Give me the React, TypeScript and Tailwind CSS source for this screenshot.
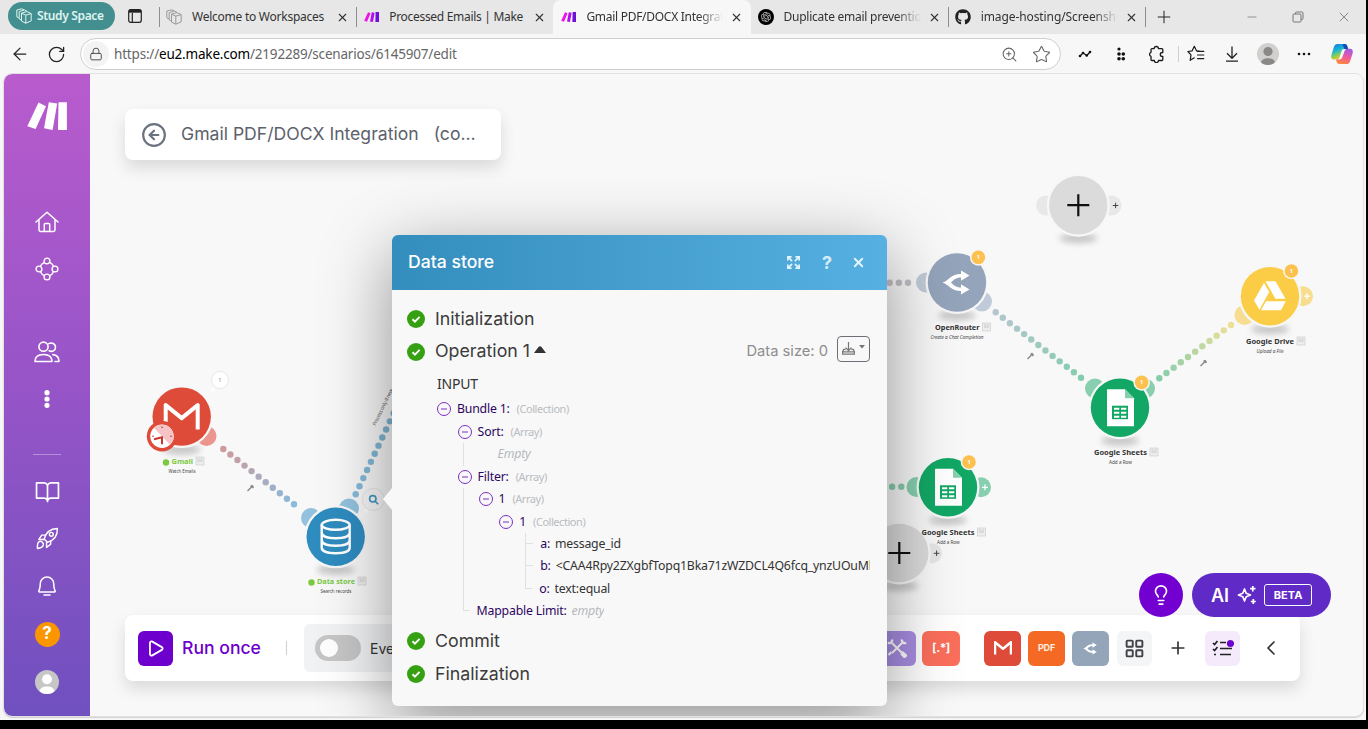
import React from "react";
import {
  ArrowLeft,
  CircleArrowLeft,
  Download,
  Expand,
  Lightbulb,
  LayoutGrid,
  Lock,
  Minus,
  Plus,
  RotateCw,
  Star,
  X,
  ZoomIn,
  Play,
  ChevronLeft,
} from "lucide-react";
import { FaGithub } from "react-icons/fa";
import { RiOpenaiFill } from "react-icons/ri";
import { PiBellSimple, PiBookOpen } from "react-icons/pi";

const SEGOE = "font-['Noto_Sans',sans-serif]";
const INTER = "font-['Inter',sans-serif]";

/* ---------- Icons ---------- */

function MakeMark({ className }: { className?: string }) {
  return (
    <svg viewBox="0 0 40 28" className={className} fill="currentColor">
      <path d="M11.5.6 19 4.3 8.6 27 .3 24.2z" />
      <path d="M21.8.3 30.2 1.6 25.6 28 17 26.2z" />
      <path d="M31.5.2h8.4V28h-8.9z" />
    </svg>
  );
}

function MakeFavicon() {
  return (
    <svg viewBox="0 0 15 10" className="h-[10px] w-[15px]">
      <path d="M4 .2 6.6 1.3 3 9.8.2 8.8z" fill="#f013e6" />
      <path d="M7.8.2 10.6.8 9 10 6 9.5z" fill="#b40ef0" />
      <path d="M11.6.1H15V10h-3.6z" fill="#6d10d8" />
    </svg>
  );
}

function WorkspaceIcon({ className }: { className?: string }) {
  return (
    <svg viewBox="0 0 16 16" className={className} fill="none" stroke="currentColor" strokeWidth="1">
      <path d="M5.5 5.2 11 3.6l4.2 2v7.2l-5.4 2.4-4.3-2.1zM5.5 5.2l4.3 1.9 5.4-1.5M9.8 7.1v8.1" />
      <path d="M5.5 12.2l-2.3-1.4V3.5L8.6 2l2.2 1.2" />
      <path d="M3.2 10.2.8 8.8V2L5.8.8 8 1.9" />
    </svg>
  );
}

function TabActionsIcon() {
  return (
    <svg viewBox="0 0 14 14" className="h-[14px] w-[14px]" fill="none" stroke="#222" strokeWidth="1.2">
      <rect x=".7" y=".7" width="12.6" height="12.6" rx="2" />
      <path d="M1 2.2h12" strokeWidth="3" />
      <path d="M4.3 4v9" />
    </svg>
  );
}

function PuzzleIcon() {
  return (
    <svg viewBox="0 0 18 18" className="h-[18px] w-[18px]" fill="none" stroke="#1a1a1a" strokeWidth="1.3" strokeLinejoin="round">
      <path d="M6.2 3.6a2.1 2.1 0 0 1 4.2 0h3.4a1 1 0 0 1 1 1v2.9h-.6a1.9 1.9 0 0 0 0 3.8h.6v3.2a1 1 0 0 1-1 1h-3.3a2.1 2.1 0 0 1-4.2 0H4a1 1 0 0 1-1-1v-3.2a2.1 2.1 0 0 1 0-4V4.6a1 1 0 0 1 1-1z" />
    </svg>
  );
}

function FavoritesIcon() {
  return (
    <svg viewBox="0 0 18 18" className="h-[18px] w-[18px]" fill="none" stroke="#1a1a1a" strokeWidth="1.2" strokeLinejoin="round" strokeLinecap="round">
      <path d="M12 6.2 9.5 5.8 7.3 1.3 5.2 5.8.9 6.5 4 9.9l-.8 5.4 4.1-2.5" />
      <path d="M10.5 6.4h6.3M10.5 10h6.3M10.5 13.6h6.3" />
    </svg>
  );
}

function CopilotIcon() {
  return (
    <svg viewBox="0 0 24 22" className="h-[22px] w-[24px]">
      <defs>
        <linearGradient id="cop-a" x1="0" y1="0" x2=".4" y2="1">
          <stop offset="0" stopColor="#1673e0" />
          <stop offset=".45" stopColor="#19b6d8" />
          <stop offset=".75" stopColor="#8ccf4f" />
          <stop offset="1" stopColor="#fbc31c" />
        </linearGradient>
        <linearGradient id="cop-b" x1=".6" y1="0" x2=".3" y2="1">
          <stop offset="0" stopColor="#a45be6" />
          <stop offset=".5" stopColor="#ef5a9c" />
          <stop offset="1" stopColor="#fb8a3c" />
        </linearGradient>
      </defs>
      <path d="M7.5 1h7.2c1.7 0 2.3 1.2 2.8 2.8l.6 2.2h-3.8c-1.5 0-2.3.8-2.8 2.3L9.6 14c-.6 1.8-1.5 2.6-3 2.6H4c-2.4 0-3.4-2-2.6-4.6l2.5-8C4.600 2 5.700 1 7.500 1z" fill="url(#cop-a)" />
      <path d="M16.500 21H9.300c-1.700 0-2.300-1.200-2.800-2.800L6 16.400h3.600c1.500 0 2.300-.8 2.800-2.300l2-5.700c.6-1.800 1.500-2.600 3-2.600H20c2.400 0 3.400 2 2.600 4.600l-2.500 7.800c-.7 2-1.800 2.800-3.600 2.800z" fill="url(#cop-b)" />
      <path d="M12.500 1h2.200c1.700 0 2.300 1.200 2.800 2.800l.6 2.200h-3.800z" fill="#1648b8" />
    </svg>
  );
}

function HomeIcon() {
  return (
    <svg viewBox="0 0 24 22" className="h-[22px] w-6" fill="none" stroke="#fff" strokeWidth="1.5" strokeLinecap="round" strokeLinejoin="round">
      <path d="M1 11 12 1.300 23 11M4 9v9.800c0 .9.7 1.600 1.600 1.600h12.800c.9 0 1.600-.7 1.600-1.600V9" />
      <path d="M9.300 20.200v-6.700c0-.5.4-.9.9-.9h3.600c.5 0 .9.4.9.9v6.700" />
    </svg>
  );
}

function NetworkIcon() {
  return (
    <svg viewBox="0 0 24 24" className="h-6 w-6" fill="none" stroke="#fff" strokeWidth="1.400">
      <circle cx="12" cy="4" r="2.900" />
      <circle cx="12" cy="20" r="2.900" />
      <circle cx="4" cy="12" r="2.900" />
      <circle cx="20" cy="12" r="2.900" />
      <path d="M9.300 5.400C7.500 6.200 6.200 7.500 5.400 9.300M14.700 5.400c1.800.8 3.100 2.100 3.900 3.900M9.300 18.600c-1.800-.8-3.100-2.100-3.900-3.900M14.700 18.600c1.800-.8 3.100-2.100 3.900-3.900" />
    </svg>
  );
}

function TeamIcon() {
  return (
    <svg viewBox="0 0 26 22" className="h-[22px] w-[26px]" fill="none" stroke="#fff" strokeWidth="1.600" strokeLinejoin="round" strokeLinecap="round">
      <circle cx="9.500" cy="5.700" r="4.600" />
      <path d="M1 20.500c0-4.600 3.200-7 8.500-7s8.500 2.400 8.500 7z" />
      <path d="M14.800 2.600c3-1.600 6.700.3 6.700 3.600 0 3.500-3.500 5-6.300 3.600M18.800 13.600c3.900.3 6.200 2.900 6.200 6.900h-4" />
    </svg>
  );
}

function RocketIcon() {
  return (
    <svg viewBox="0 0 24 24" className="h-[23px] w-[23px]" fill="none" stroke="#fff" strokeWidth="1.500" strokeLinejoin="round" strokeLinecap="round">
      <path d="M8.500 12.500C10 6.500 14 1.800 22.300 1.500c.3 8-4.200 12.500-10.300 14.500z" />
      <circle cx="16" cy="7.600" r="2" />
      <path d="M10 8.500H6L3 13h5.500M15.300 14.200V18L11 21.300v-5" />
      <path d="M3.200 15.300c2.100-1.400 5.400 1.300 4.400 3.800-.6 1.700-2.700 3-6.100 3.300-.2-3.400.3-6.200 1.700-7.100z" />
    </svg>
  );
}

function Person({ size, bg, fg }: { size: string; bg: string; fg: string }) {
  return (
    <svg viewBox="0 0 24 24" className={size}>
      <defs>
        <clipPath id={"p" + fg.slice(1)}>
          <circle cx="12" cy="12" r="12" />
        </clipPath>
      </defs>
      <g clipPath={`url(#${"p" + fg.slice(1)})`}>
        <rect width="24" height="24" fill={bg} />
        <circle cx="12" cy="9.300" r="5" fill={fg} />
        <path d="M4 24c0-5 2.500-7.500 8-7.500s8 2.500 8 7.500z" fill={fg} />
      </g>
    </svg>
  );
}

const ROUTER_PATH =
  "M-14.500 0C-8-2-6.500-8.500 4-8.600V-12L12.500-7 4-1.700V-5C-1-5-3.500-2.500-6 0-3.500 2.500-1 5 4 5V1.700L12.500 7 4 12V8.600C-6.500 8.500-8 2-14.500 0z";
const GMAIL_PATH = "M-16 13V-11.500L0 1.500 16-11.500V13";

/* ---------- Browser chrome ---------- */

type TabProps = { icon: React.ReactNode; title: string; titleClass: string; active?: boolean; fade?: boolean; sep?: boolean };

function Tab({ icon, title, titleClass, active, fade, sep }: TabProps) {
  return (
    <div
      className={`relative flex w-[197.200px] shrink-0 items-center pl-[7px] ${
        active ? "h-[34px] rounded-t-lg bg-[#f7f7f7]" : "h-[34px]"
      }`}
    >
      {sep && <span className="absolute left-0 top-[7px] h-[20px] w-px bg-[#8d8d8d]" />}
      <span className="flex w-4 items-center justify-center">{icon}</span>
      <span
        className={`ml-[10px] w-[137px] overflow-hidden whitespace-nowrap text-[12px] text-[#333] ${titleClass} ${
          fade ? "[mask-image:linear-gradient(to_right,black_82%,transparent_100%)]" : ""
        }`}
      >
        {title}
      </span>
      <X className="ml-[7px] h-[13px] w-[13px] text-[#333]" strokeWidth={2} />
    </div>
  );
}

function TabBar() {
  return (
    <div className={`flex h-[34px] items-center bg-[#e7e7e7] ${SEGOE}`}>
      <div className="mb-[2px] ml-2 flex h-7 w-[107px] items-center gap-[5px] rounded-full bg-[#438f8f] pl-2 text-[#dff3f2]">
        <WorkspaceIcon className="h-4 w-4" />
        <span className="whitespace-nowrap text-[12px] font-semibold tracking-[-0.350px]">Study Space</span>
      </div>
      <div className="mb-[2px] ml-[13px] mr-[17px]">
        <TabActionsIcon />
      </div>
      <Tab sep icon={<WorkspaceIcon className="h-4 w-4 text-[#999]" />} title="Welcome to Workspaces" titleClass="tracking-[-0.250px]" />
      <Tab sep icon={<MakeFavicon />} title="Processed Emails | Make" titleClass="tracking-[-0.300px]" />
      <Tab active fade icon={<MakeFavicon />} title="Gmail PDF/DOCX Integration" titleClass="tracking-[-0.280px]" />
      <Tab
        fade
        icon={
          <span className="flex h-4 w-4 items-center justify-center rounded-full bg-black">
            <RiOpenaiFill className="h-3 w-3 text-[#ccc]" />
          </span>
        }
        title="Duplicate email prevention"
        titleClass="tracking-[-0.250px]"
      />
      <Tab sep fade icon={<FaGithub className="h-4 w-4 text-[#222]" />} title="image-hosting/Screenshots" titleClass="tracking-[-0.100px]" />
      <span className="h-5 w-px bg-[#8d8d8d]" />
      <Plus className="ml-[8px] h-5 w-5 text-[#222]" strokeWidth={1.2} />
      <Minus className="ml-[71px] h-[14px] w-[14px] text-[#777]" strokeWidth={1.3} />
      <svg viewBox="0 0 12 12" className="ml-[33px] h-3 w-3" fill="none" stroke="#777">
        <rect x="1" y="3" width="8" height="8" rx="1" />
        <path d="M3.500 3V2c0-.6.4-1 1-1H10c.6 0 1 .4 1 1v5.500c0 .6-.4 1-1 1H9" />
      </svg>
      <X className="ml-[32px] h-4 w-4 text-[#777]" strokeWidth={1.3} />
    </div>
  );
}

function Cell({ children }: { children: React.ReactNode }) {
  return <span className="flex w-9 shrink-0 items-center justify-center">{children}</span>;
}

function AddressBar() {
  return (
    <div className={`flex h-[40px] items-center bg-[#f7f7f7] ${SEGOE}`}>
      <div className="flex w-10 justify-center">
        <ArrowLeft className="h-5 w-5 text-[#222]" strokeWidth={1.5} />
      </div>
      <div className="flex w-8 justify-center">
        <RotateCw className="h-[19px] w-[19px] text-[#222]" strokeWidth={1.6} />
      </div>
      <div className="ml-2 flex h-8 w-[981px] items-center rounded-full border border-[#cfcfcf] bg-white pl-[2px]">
        <span className="flex h-[26px] w-[26px] items-center justify-center rounded-full bg-[#f3f3f3]">
          <Lock className="h-[14px] w-[14px] text-[#444]" strokeWidth={1.6} />
        </span>
        <span className="ml-[5px] whitespace-nowrap text-[13.500px] tracking-[-0.190px] text-[#666]">
          https://<span className="text-black">eu2.make.com</span>/2192289/scenarios/6145907/edit
        </span>
        <ZoomIn className="ml-auto h-[17px] w-[17px] text-[#666]" strokeWidth={1.5} />
        <Star className="ml-[14px] mr-[9px] h-[19px] w-[19px] text-[#666]" strokeWidth={1.4} />
      </div>
      <div className="ml-[6px] flex items-center">
        <Cell>
          <svg viewBox="0 0 14 8" className="h-2 w-[14px]" fill="#111" stroke="#111">
            <path d="M2 6 5 3l4 2.500L12 2" fill="none" strokeWidth="1.300" />
            <circle cx="2" cy="6" r="1.300" stroke="none" />
            <circle cx="5" cy="3" r="1.300" stroke="none" />
            <circle cx="8.700" cy="5.500" r="1.300" stroke="none" />
            <circle cx="12" cy="2" r="1.300" stroke="none" />
          </svg>
        </Cell>
        <Cell>
          <svg viewBox="0 0 10 14" className="h-[14px] w-[10px]" fill="#111">
            <circle cx="3" cy="2" r="1.600" />
            <circle cx="3" cy="7" r="1.800" />
            <circle cx="7.300" cy="7" r="1.800" />
            <circle cx="3" cy="11.800" r="1.800" />
            <circle cx="7.300" cy="11.800" r="1.800" />
          </svg>
        </Cell>
        <Cell>
          <PuzzleIcon />
        </Cell>
        <span className="ml-[3px] h-4 w-px bg-[#cfcfcf]" />
        <span className="ml-[-1px] flex">
          <Cell>
            <FavoritesIcon />
          </Cell>
          <Cell>
            <svg viewBox="0 0 14 16" className="h-4 w-[14px]" fill="none" stroke="#222" strokeWidth="1.300">
              <path d="M7 .5v11.500M2 7.300l5 5 5-5M1 15.200h12" />
            </svg>
          </Cell>
          <Cell>
            <Person size="h-[22px] w-[22px]" bg="#d2d0ce" fg="#8a8886" />
          </Cell>
          <Cell>
            <svg viewBox="0 0 14 4" className="h-1 w-[14px]" fill="#111">
              <circle cx="2" cy="2" r="1.300" />
              <circle cx="7" cy="2" r="1.300" />
              <circle cx="12" cy="2" r="1.300" />
            </svg>
          </Cell>
          <span className="ml-[2px]">
            <Cell>
              <CopilotIcon />
            </Cell>
          </span>
        </span>
      </div>
    </div>
  );
}

/* ---------- Side navigation ---------- */

function NavItem({ children, tall }: { children: React.ReactNode; tall?: boolean }) {
  return <div className={`flex w-full items-center justify-center ${tall ? "h-12" : "h-[47px]"}`}>{children}</div>;
}

function Sidebar() {
  return (
    <nav className="flex w-[86px] shrink-0 flex-col items-center rounded-l-lg bg-linear-to-b from-[#b85bcd] via-[#9554c7] to-[#7050bf] pt-7">
      <MakeMark className="h-7 w-10 text-white" />
      <div className="mt-[68px] w-full">
        <NavItem><HomeIcon /></NavItem>
        <NavItem><NetworkIcon /></NavItem>
      </div>
      <div className="mt-[36px] w-full">
        <NavItem><TeamIcon /></NavItem>
        <NavItem>
          <svg viewBox="0 0 6 18" className="h-[18px] w-[6px]" fill="#fff">
            <circle cx="3" cy="2.700" r="2.600" />
            <circle cx="3" cy="9" r="2.600" />
            <circle cx="3" cy="15.300" r="2.600" />
          </svg>
        </NavItem>
      </div>
      <div className="mt-[32px] h-px w-7 bg-[#b88fd8]" />
      <div className="mt-[11px] w-full">
        <NavItem tall><PiBookOpen className="h-[27px] w-[27px] text-white" /></NavItem>
        <NavItem tall><RocketIcon /></NavItem>
        <NavItem tall><PiBellSimple className="h-6 w-6 text-white" /></NavItem>
        <NavItem tall>
          <span className={`flex h-[25px] w-[25px] items-center justify-center rounded-full bg-[#fb9500] text-[17px] font-bold text-white ${INTER}`}>
            ?
          </span>
        </NavItem>
        <NavItem tall><Person size="h-6 w-6" bg="#c6c6c6" fg="#ffffff" /></NavItem>
      </div>
    </nav>
  );
}

/* ---------- Scenario diagram ---------- */

type P = [number, number];

function mix(a: string, b: string, t: number) {
  const c = (s: string, i: number) => parseInt(s.slice(1 + i * 2, 3 + i * 2), 16);
  return `rgb(${[0, 1, 2].map((i) => Math.round(c(a, i) + (c(b, i) - c(a, i)) * t)).join(",")})`;
}

function Dots({ from, to, n, a, b }: { from: P; to: P; n: number; a: string; b: string }) {
  return (
    <>
      {Array.from({ length: n }, (_, i) => {
        const t = i / (n - 1);
        return (
          <circle key={i} cx={from[0] + (to[0] - from[0]) * t} cy={from[1] + (to[1] - from[1]) * t} r={3.2} fill={mix(a, b, t)} />
        );
      })}
    </>
  );
}

type NodeProps = { at: P; color: string; nub: string; nubs: P[]; badge?: P; children: React.ReactNode };

function Node({ at, color, nub, nubs, badge, children }: NodeProps) {
  return (
    <g>
      <ellipse cx={at[0]} cy={at[1] + 33} rx="19" ry="5" fill="#000" opacity=".2" filter="url(#soft)" />
      {nubs.map((n, i) => (
        <circle key={i} cx={n[0]} cy={n[1]} r="10" fill={nub} />
      ))}
      <circle cx={at[0]} cy={at[1]} r="31.500" fill="#f7f7f7" />
      <circle cx={at[0]} cy={at[1]} r="29.200" fill={color} />
      <g transform={`translate(${at[0]} ${at[1]})`}>{children}</g>
      {badge && (
        <g>
          <circle cx={badge[0]} cy={badge[1]} r="8.300" fill="#f7f7f7" />
          <circle cx={badge[0]} cy={badge[1]} r="6.800" fill="#fcc14f" />
          <text x={badge[0]} y={badge[1] + 2} fontSize="5.500" textAnchor="middle" fill="#fff" fontWeight="700">1</text>
        </g>
      )}
    </g>
  );
}

type LabelProps = { x: number; y: number; w: number; title: string; sub: string; sw: number; sx: number; color?: string; dot?: boolean; italic?: boolean };

function Label({ x, y, w, title, sub, sw, sx, color = "#333", dot, italic }: LabelProps) {
  return (
    <g>
      {dot && <circle cx={x - 5.5} cy={y - 1.500} r="3.200" fill="#7ac943" />}
      <text x={x} y={y} fontSize="7.500" fontWeight="700" fill={color} textLength={w} lengthAdjust="spacingAndGlyphs">{title}</text>
      <rect x={x + w + 3} y={y - 7} width="8" height="8" fill="#ededed" stroke="#c9c9c9" strokeWidth=".6" />
      <path d={`M${x + w + 4.500} ${y - 3}h5M${x + w + 4.500} ${y - 5}h2m1 0h2`} stroke="#bdbdbd" strokeWidth=".8" />
      <text x={sx} y={y + 8.500} fontSize="5.300" fill="#444" fontStyle={italic ? "italic" : "normal"} textLength={sw} lengthAdjust="spacingAndGlyphs">{sub}</text>
    </g>
  );
}

function SheetGlyph() {
  return (
    <g>
      <path d="M-12-18.500H5L14-9.500V18.500H-13V-17.500C-13-18.200-12.700-18.500-12-18.500z" fill="#fff" />
      <path d="M5-18.500 14-9.500H5z" fill="#86cfab" />
      <rect x="-8" y="-2" width="16" height="13.500" fill="#12a765" />
      <path d="M-6 1h5.300M1 1h5.300M-6 5h5.300M1 5h5.300M-6 9h5.300M1 9h5.300" stroke="#fff" strokeWidth="2" />
    </g>
  );
}

function PlusGlyph() {
  return <path d="M-11 0H11M0-11V11" stroke="#111" strokeWidth="2.200" />;
}

function Wrench({ at }: { at: P }) {
  return (
    <g transform={`translate(${at[0]} ${at[1]})`} stroke="#888" fill="none" strokeWidth="1.500">
      <path d="M-3 3 1-1" />
      <path d="M.2-2.500 3-.2M1-1 2.500-2.500" strokeWidth="1.800" />
    </g>
  );
}

function Diagram() {
  return (
    <svg viewBox="90 74 1273 642" className="absolute inset-0 h-[642px] w-[1273px]" fontFamily="Noto Sans, sans-serif">
      <defs>
        <filter id="soft" x="-50%" y="-100%" width="200%" height="300%">
          <feGaussianBlur stdDeviation="3" />
        </filter>
      </defs>

      <Dots from={[223.3, 449]} to={[294, 504.3]} n={11} a="#d09a9c" b="#89bbdb" />
      <Dots from={[355.700, 494.3]} to={[401.3, 397]} n={13} a="#86bbdc" b="#7fb4d0" />
      <Dots from={[880.500, 282.700]} to={[908, 282.700]} n={4} a="#c9bcc0" b="#bfc0c6" />
      <Dots from={[995.700, 312.3]} to={[1081, 377.700]} n={13} a="#b5c6cf" b="#85cdae" />
      <Dots from={[1159.3, 378.3]} to={[1231, 325]} n={11} a="#86cdac" b="#ecdf96" />
      <Dots from={[883, 486.700]} to={[901.3, 486.700]} n={3} a="#86cdae" b="#86cdae" />
      <Wrench at={[250.500, 488]} />
      <Wrench at={[1030.500, 356]} />
      <Wrench at={[1203.500, 363]} />
      <text transform="translate(375.500 426) rotate(-64)" fontSize="5" fill="#555" textLength="40">Process only if new</text>

      <Node at={[181.700, 416.600]} color="#de4b39" nub="#eb958f" nubs={[[206.500, 436]]}>
        <path d={GMAIL_PATH} fill="none" stroke="#fff" strokeWidth="4" strokeLinejoin="round" />
        <g transform="translate(-19.700 19.700)">
          <circle r="15.200" fill="#de4b39" />
          <circle r="11.700" fill="#fff" />
          <path d="M0-11.500A11.500 11.500 0 0 1 8 8.300L0 0-8-8.300A11.500 11.500 0 0 1 0-11.500z" fill="#f6c4c4" />
          <path d="M-8 3 0 1v7" stroke="#c9392b" strokeWidth="2" fill="none" />
          <circle cy="-9" r=".8" fill="#b33" />
          <circle cx="9" r=".8" fill="#b33" />
          <circle cx="-9" r=".8" fill="#b33" />
        </g>
      </Node>
      <circle cx="220" cy="380" r="8.500" fill="#fff" stroke="#e8e8e8" />
      <circle cx="212.500" cy="390" r="1.800" fill="#fff" />
      <text x="220" y="382" fontSize="5" textAnchor="middle" fill="#777">1</text>
      <Label x={171.500} y={464} w={21.500} title="Gmail" sub="Watch Emails" sx={168.500} sw={27} color="#7ac943" dot />

      <Node at={[335.700, 536.800]} color="#2f8cbf" nub="#93c2de" nubs={[[311, 518], [349, 508.500]]}>
        <g fill="none" stroke="#fff" strokeWidth="2.400">
          <ellipse cy="-12" rx="14" ry="5" />
          <path d="M-14-12V11C-14 14.500-8 16.500 0 16.500S14 14.500 14 11V-12M-14-4C-14-.5-8 1.500 0 1.500S14-.5 14-4M-14 3.500C-14 7-8 9 0 9S14 7 14 3.500" />
        </g>
      </Node>
      <circle cx="373.500" cy="499.500" r="11" fill="#f8f8f8" stroke="#e6e6e6" />
      <g fill="none" stroke="#4096c4" strokeWidth="1.600">
        <circle cx="372.800" cy="498.800" r="3.200" />
        <path d="m375.200 501.200 3 3" />
      </g>
      <circle cx="366" cy="511" r="2" fill="#fff" />
      <Label x={317} y={584} w={38} title="Data store" sub="Search records" sx={320.500} sw={31} color="#7ac943" dot />

      <Node at={[957, 282.500]} color="#94a4bb" nub="#c1cad8" nubs={[[926, 282.500], [982, 301.500]]} badge={[978.3, 257.400]}>
        <path d={ROUTER_PATH} fill="#fff" />
      </Node>
      <Label x={935} y={330} w={44.500} title="OpenRouter" sub="Create a Chat Completion" sx={930.500} sw={53} italic />

      <Node at={[1120, 407.700]} color="#12a765" nub="#87cfae" nubs={[[1095, 388.500], [1145, 388.500]]} badge={[1141.700, 382.400]}>
        <SheetGlyph />
      </Node>
      <Label x={1094} y={455} w={53} title="Google Sheets" sub="Add a Row" sx={1109} sw={23} />

      <Node at={[1270, 296.200]} color="#fbcc45" nub="#f7dd90" nubs={[[1244.500, 315], [1303, 296.300]]} badge={[1291.400, 271]}>
        <path d="M-4.500-15H5.500L15.500 2.500H5.300zM-6-13.500-.8-4.300-10.500 13.500-16 4.300zM-4 5H15.800L11 14H-9z" fill="#fff" />
        <path d="M34 0h6M37-3v6" stroke="#fff" strokeWidth="1.200" />
      </Node>
      <Label x={1246} y={344} w={48} title="Google Drive" sub="Upload a File" sx={1256.500} sw={27} italic />

      <Node at={[899.300, 553]} color="#dbdbdb" nub="#e6e6e6" nubs={[[932, 553.300]]}>
        <PlusGlyph />
        <path d="M34.500.300h5.500M37.300-2.500v5.500" stroke="#444" strokeWidth="1" />
      </Node>

      <Node at={[948, 487.300]} color="#12a765" nub="#87cfae" nubs={[[916.500, 487], [981, 487.300]]} badge={[969, 462]}>
        <SheetGlyph />
        <path d="M34 0h6M37-3v6" stroke="#fff" strokeWidth="1.200" />
      </Node>
      <Label x={921.500} y={535} w={53} title="Google Sheets" sub="Add a Row" sx={937} sw={22.500} />

      <Node at={[1078.300, 205.200]} color="#dbdbdb" nub="#e8e8e8" nubs={[[1046, 205.400], [1111.500, 205.400]]}>
        <PlusGlyph />
        <path d="M34.500.300h5.500M37.300-2.500v5.500" stroke="#444" strokeWidth="1" />
      </Node>
    </svg>
  );
}

/* ---------- Data store inspector ---------- */

function Check() {
  return (
    <svg viewBox="0 0 18 18" className="h-[18px] w-[18px] shrink-0">
      <circle cx="9" cy="9" r="9" fill="#36a013" />
      <path d="m5.500 9.300 2.400 2.300 4.700-4.800" fill="none" stroke="#fff" strokeWidth="1.900" />
    </svg>
  );
}

function Phase({ children }: { children: React.ReactNode }) {
  return (
    <div className={`flex h-[32.500px] items-center gap-[10px] text-[17.800px] text-[#3b3b3b] ${INTER}`}>
      <Check />
      {children}
    </div>
  );
}

function Branch({ name, type }: { name: string; type: string }) {
  return (
    <div className="flex h-[22.500px] items-center">
      <svg viewBox="0 0 14 14" className="h-[14px] w-[14px]" fill="none" stroke="#7b2fc4" strokeWidth="1">
        <circle cx="7" cy="7" r="6.500" />
        <path d="M4 7h6" />
      </svg>
      <span className="ml-[6px] text-[#2d0560]">{name}</span>
      <span className="ml-[7px] text-[11px] tracking-[-0.450px] text-[#b9bcc0]">{type}</span>
    </div>
  );
}

function Leaf({ name, value, last, valueClass }: { name: string; value: string; last?: boolean; valueClass: string }) {
  return (
    <div className={`relative flex h-[22.300px] items-center pl-[14px] ${last ? "" : "border-l border-[#e0e0e0]"}`}>
      <span className={`absolute left-0 top-0 h-1/2 w-[7px] border-b border-[#e0e0e0] ${last ? "border-l" : ""}`} />
      <span className="shrink-0 text-[#2d0560]">{name}</span>
      <span className={`ml-[5px] overflow-hidden whitespace-nowrap ${valueClass}`}>{value}</span>
    </div>
  );
}

function Inspector() {
  return (
    <section className="absolute left-[302px] top-[161px] h-[471px] w-[495px] rounded-md bg-[#f8f8f8] shadow-[0_18px_70px_rgba(0,0,0,0.42)]">
      <span className="absolute -left-[9px] top-[253px] h-0 w-0 border-y-[11px] border-r-[9px] border-y-transparent border-r-[#f8f8f8]" />
      <header className={`flex h-[55px] items-center rounded-t-md bg-linear-to-r from-[#338dbd] to-[#56b0e1] pl-4 pr-[21px] text-white ${INTER}`}>
        <h2 className="text-[17.600px] font-medium">Data store</h2>
        <Expand className="ml-auto h-[15px] w-[15px] text-[#e6f5fd]" strokeWidth={2.6} />
        <span className="ml-[21px] text-[18px] font-bold text-[#d5edfa]">?</span>
        <X className="ml-[19px] h-[15px] w-[15px] text-[#e6f5fd]" strokeWidth={3} />
      </header>
      <div className="px-[15px] pt-[13px]">
        <Phase>Initialization</Phase>
        <div className="flex h-[32.500px] items-center">
          <Phase>
            <span className="flex items-center gap-1 whitespace-nowrap">
              Operation 1
              <svg viewBox="0 0 12 7" className="mb-1 h-[7px] w-3" fill="#333">
                <path d="M0 7 4.500 1Q6-.6 7.500 1L12 7z" />
              </svg>
            </span>
          </Phase>
          <span className={`mb-[2px] ml-auto whitespace-nowrap text-[14.700px] text-[#8d8d8d] ${INTER}`}>Data size: 0</span>
          <span className="mb-[6px] ml-[9px] mr-[2px] flex h-[26px] w-[33px] items-center justify-center gap-1 rounded-[4px] border border-[#6c6f75]">
            <svg viewBox="0 0 14 14" className="h-[13px] w-[13px]" fill="none" stroke="#777" strokeWidth="1.300">
              <path d="M7 0v9M3.800 6 7 9.200 10.200 6M4 8H1.800L.7 10.500V13h12.600v-2.500L12.200 8H10M.7 10.700h12.600" />
            </svg>
            <svg viewBox="0 0 6 4" className="mb-1 h-1 w-[6px]" fill="#777">
              <path d="M0 0h6L3 3.500z" />
            </svg>
          </span>
        </div>
        <div className={`pl-[30px] pr-[2px] text-[12.300px] tracking-[-0.200px] text-[#333] ${SEGOE}`}>
          <div className="mt-[7px] h-[17px] pl-[-1px] text-[14px] leading-[17px]">INPUT</div>
          <div className="mt-[6px]">
            <Branch name="Bundle 1:" type="(Collection)" />
            <div className="ml-[20.600px]">
              <Branch name="Sort:" type="(Array)" />
              <div className="ml-[5px] flex h-[22.500px] items-center border-l border-[#e0e0e0] pl-[34px] italic text-[#b4b8bc]">Empty</div>
              <Branch name="Filter:" type="(Array)" />
              <div className="ml-[5px] border-l border-[#e0e0e0]">
                <div className="ml-[15px]">
                  <Branch name="1" type="(Array)" />
                  <div className="ml-[20.600px]">
                    <Branch name="1" type="(Collection)" />
                    <div className="ml-[26px]">
                      <Leaf name="a:" value="message_id" valueClass="" />
                      <Leaf name="b:" value="<CAA4Rpy2ZXgbfTopq1Bka71zWZDCL4Q6fcq_ynzUOuMhw@mail.gmail.com>" valueClass="" />
                      <Leaf last name="o:" value="text:equal" valueClass="" />
                    </div>
                  </div>
                </div>
              </div>
              <div className="ml-[5px]">
                <Leaf last name="Mappable Limit:" value="empty" valueClass="italic text-[#b4b8bc]" />
              </div>
            </div>
          </div>
        </div>
        <div className="mt-[3px]">
          <Phase>Commit</Phase>
          <Phase>Finalization</Phase>
        </div>
      </div>
    </section>
  );
}

/* ---------- Floating panels ---------- */

function TitleCard() {
  return (
    <div className={`relative mt-[35px] flex h-[51px] w-[376px] items-center rounded-lg bg-white pl-4 text-[17.600px] text-[#5c616b] shadow-[0_8px_16px_rgba(0,0,0,0.12)] ${INTER}`}>
      <CircleArrowLeft className="h-[26px] w-[26px] text-[#6b7280]" strokeWidth={2} />
      <span className="ml-[14px] whitespace-nowrap">Gmail PDF/DOCX Integration</span>
      <span className="ml-[15px] whitespace-nowrap">(co...</span>
    </div>
  );
}

function Tile({ className, children }: { className: string; children: React.ReactNode }) {
  return <span className={`flex h-[35px] items-center justify-center rounded-md ${className}`}>{children}</span>;
}

function BottomBar() {
  return (
    <div className={`relative mb-[35px] mt-auto flex h-[66px] w-[1175px] items-center rounded-lg bg-white pl-[13px] shadow-[0_8px_16px_rgba(0,0,0,0.12)] ${INTER}`}>
      <Tile className="w-[35px] bg-[#6d00cc]">
        <Play className="h-[19px] w-[19px] text-white" strokeWidth={2.3} />
      </Tile>
      <span className="ml-[9px] whitespace-nowrap text-[17.600px] font-medium text-[#6d00cc]">Run once</span>
      <span className="ml-[25px] h-[14px] w-px bg-[#cfcfcf]" />
      <div className="ml-[17px] flex h-12 w-[220px] items-center rounded-md bg-[#f1f2f4] pl-[11px]">
        <span className="flex h-[26px] w-[46px] items-center rounded-full bg-[#c6c6c6] pl-[5px]">
          <span className="h-[18px] w-[18px] rounded-full bg-white" />
        </span>
        <span className="ml-[9px] whitespace-nowrap text-[14px] text-[#333]">Every 15 minutes</span>
      </div>
      <div className="ml-auto flex items-center">
        <Tile className="w-[38px] bg-[#a98ee3]">
          <svg viewBox="0 0 20 20" className="h-5 w-5" fill="none" stroke="#fff" strokeWidth="2">
            <path d="m5 5 10 10M15 5 5 15" />
            <path d="M1 4.500c2 1.500 4.500 0 4-3M19 4.500c-2 1.500-4.500 0-4-3M1.500 17l3-3M15 14l4 3.500-1.500 1.500L14 15.500" strokeWidth="2.400" />
          </svg>
        </Tile>
        <Tile className="ml-[6px] w-[38px] bg-[#fb6f5b]">
          <span className="text-[12px] font-bold tracking-[-0.500px] text-white">[.*]</span>
        </Tile>
        <Tile className="ml-[24px] w-[37px] bg-[#de4b39]">
          <svg viewBox="-18 -14 36 30" className="h-[15px] w-[18px]">
            <path d={GMAIL_PATH} fill="none" stroke="#fff" strokeWidth="5" strokeLinejoin="round" />
          </svg>
        </Tile>
        <Tile className="ml-[7px] w-[37px] bg-[#f46a25]">
          <span className="text-[9px] font-bold tracking-[-0.200px] text-[#ffece0]">PDF</span>
        </Tile>
        <Tile className="ml-[7px] w-[37px] bg-[#94a4b9]">
          <svg viewBox="-15 -13 30 26" className="h-[13px] w-[15px]" fill="#fff">
            <path d={ROUTER_PATH} />
          </svg>
        </Tile>
        <Tile className="ml-[8px] w-[35px] bg-[#f4f5f6]">
          <LayoutGrid className="h-[21px] w-[21px] text-[#3f4249]" strokeWidth={2.2} />
        </Tile>
        <Plus className="ml-[16px] h-5 w-5 text-[#333]" strokeWidth={2} />
        <Tile className="ml-[17px] w-[35px] bg-[#f4eafb]">
          <svg viewBox="0 0 22 18" className="h-[18px] w-[22px]" fill="none" stroke="#222" strokeWidth="1.700">
            <path d="M1 4l1.600 1.600L5.500 2M1 10l1.600 1.600L5.500 8M8 3.500h6M8 9.500h12M2 15.500h2M8 15.500h11" />
            <circle cx="18.500" cy="4.500" r="3.600" fill="#6d00cc" stroke="none" />
          </svg>
        </Tile>
        <ChevronLeft className="ml-[19px] mr-[17px] h-6 w-6 text-[#333]" strokeWidth={1.7} />
      </div>
    </div>
  );
}

function AssistButtons() {
  return (
    <div className={`absolute left-[1049px] top-[499px] flex gap-[9px] text-white ${INTER}`}>
      <button className="flex h-11 w-11 items-center justify-center rounded-full bg-[#7200d0]">
        <Lightbulb className="h-[22px] w-[22px]" strokeWidth={1.8} />
      </button>
      <button className="flex h-11 w-[139px] items-center rounded-full bg-[#5f2ac6] pl-[19px]">
        <span className="text-[18px] font-semibold">AI</span>
        <svg viewBox="0 0 20 20" className="ml-[8px] h-5 w-5" fill="none" stroke="#fff" strokeWidth="1.700" strokeLinejoin="round">
          <path d="M7.500 4 9.200 8.300 13.500 10 9.200 11.700 7.500 16 5.800 11.700 1.500 10 5.800 8.300z" />
          <path d="M15.800 1v5.400M13.100 3.700h5.400M16.300 14v5M13.800 16.500h5" />
        </svg>
        <span className="ml-[7px] flex h-[22px] w-[48px] items-center justify-center rounded-[3px] border border-white text-[11px] font-bold">BETA</span>
      </button>
    </div>
  );
}

export default function App() {
  return (
    <div className="h-[729px] w-[1368px] overflow-hidden bg-black">
      <div className="flex h-[720px] w-[1366px] flex-col bg-[#f7f7f7]">
        <TabBar />
        <AddressBar />
        <div className="ml-1 flex h-[642px] w-[1359px] overflow-hidden rounded-lg shadow-[0_0_0_1px_#e2e2e2,0_1px_1px_1px_#cfcfcf]">
          <Sidebar />
          <main className="relative flex flex-1 flex-col overflow-hidden bg-[#f8f8f8] pl-[35px]">
            <Diagram />
            <TitleCard />
            <BottomBar />
            <Inspector />
            <AssistButtons />
          </main>
        </div>
      </div>
    </div>
  );
}
